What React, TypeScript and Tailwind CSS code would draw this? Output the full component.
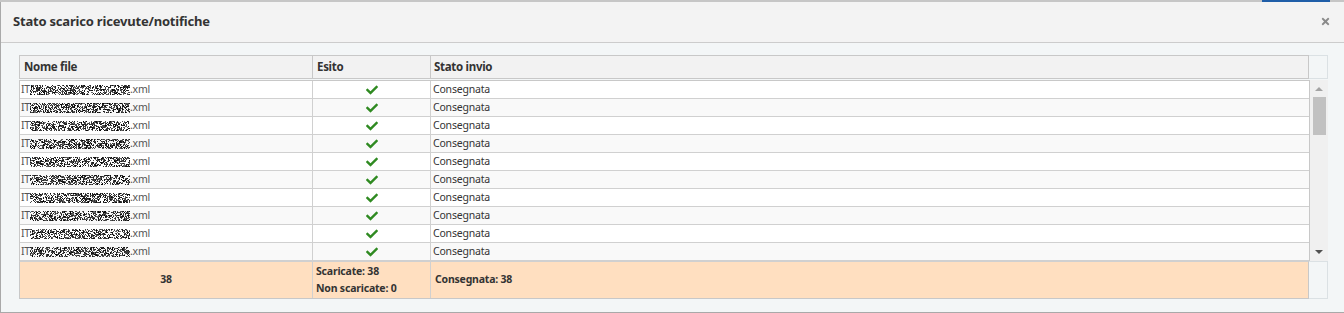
const ROWS = Array.from({ length: 10 }, (_, i) => i)

function rng(seed: number) {
  let s = seed
  return () => {
    s = (s * 1103515245 + 12345) & 0x7fffffff
    return s / 0x7fffffff
  }
}

function Noise({ seed }: { seed: number }) {
  const r = rng(seed)
  const cells: JSX.Element[] = []
  for (let y = 0; y < 10; y++) {
    for (let x = 0; x < 100; x++) {
      const v = r()
      if (v < 0.55) {
        const g = Math.floor(r() * 110)
        cells.push(<rect key={`${x}-${y}`} x={x} y={y} width="1" height="1" fill={`rgb(${g},${g},${g})`} />)
      }
    }
  }
  return (
    <svg width="100" height="10" viewBox="0 0 100 10" shapeRendering="crispEdges" className="inline-block">
      {cells}
    </svg>
  )
}

function Check() {
  return (
    <svg width="12" height="10" viewBox="0 0 512 430" className="text-[#2f8a21]">
      <path
        fill="currentColor"
        d="M173.898 399.404l-166.4-166.4c-9.997-9.997-9.997-26.206 0-36.204l36.203-36.204c9.997-9.998 26.207-9.998 36.204 0L192 272.69 432.095 32.596c9.997-9.997 26.207-9.997 36.204 0l36.203 36.204c9.997 9.997 9.997 26.206 0 36.204l-294.4 294.401c-9.998 9.997-26.207 9.997-36.204-.001z"
      />
    </svg>
  )
}

export default function App() {
  return (
    <div className="w-[1344px] h-[313px] overflow-hidden bg-[#c9c9c9] font-['Noto_Sans',sans-serif] text-[#333]">
      <div className="h-[2px] flex">
        <div className="flex-1 bg-[#c6c6c6]" />
        <div className="w-[68px] bg-[#1f5ea8]" />
        <div className="w-[14px] bg-[#c6c6c6]" />
      </div>
      <div className="h-[311px] border-l border-b border-[#a9a9a9] bg-[#f3f6f7] flex flex-col">
        <div className="h-[41px] shrink-0 bg-[#f3f3f3] border-b border-[#cccccc] flex items-center justify-between pl-[12px] pr-[14px]">
          <span className="text-[13px] font-bold text-[#333] tracking-[-0.2px]">Stato scarico ricevute/notifiche</span>
          <svg width="9" height="11" viewBox="0 0 352 512" className="text-[#8a8a8a] mt-[-2px]">
            <path
              fill="currentColor"
              d="M242.72 256l100.07-100.07c12.28-12.28 12.28-32.19 0-44.480l-22.24-22.24c-12.28-12.28-32.19-12.28-44.48 0L176 189.28 75.93 89.21c-12.28-12.28-32.19-12.28-44.48 0L9.21 111.45c-12.28 12.28-12.28 32.19 0 44.48L109.28 256 9.21 356.07c-12.28 12.28-12.28 32.19 0 44.48l22.24 22.24c12.28 12.28 32.2 12.28 44.48 0L176 322.72l100.07 100.07c12.28 12.28 32.2 12.28 44.48 0l22.24-22.24c12.28-12.28 12.28-32.19 0-44.48L242.72 256z"
            />
          </svg>
        </div>
        <div className="pt-[12px] pl-[18px]">
          <div className="w-[1309px]">
            {/* header */}
            <div className="flex h-[24px]">
              <div className="w-[1290px] flex bg-[#f2f2f2] border border-[#c8c8c8] text-[11.5px] font-bold tracking-[-0.3px]">
                <div className="w-[293px] border-r border-[#c8c8c8] pl-[4px] flex items-center">Nome file</div>
                <div className="w-[118px] border-r border-[#c8c8c8] pl-[4px] flex items-center">Esito</div>
                <div className="flex-1 pl-[3px] flex items-center">Stato invio</div>
              </div>
              <div className="w-[19px] border border-l-0 border-[#dbe1e4]" />
            </div>
            {/* body */}
            <div className="flex mt-px">
              <div className="w-[1291px] border-t border-l border-r border-[#c8c8c8]">
                {ROWS.map((i) => (
                  <div
                    key={i}
                    className={`flex h-[18px] border-b border-[#d0d0d0] text-[10.5px] tracking-[-0.2px] ${i % 2 === 0 ? "bg-white" : "bg-[#f9f9f9]"}`}
                  >
                    <div className="w-[293px] border-r border-[#d0d0d0] pl-[1px] flex items-center text-[#555]">
                      <span>IT</span>
                      <Noise seed={i * 7919 + 17} />
                      <span>.xml</span>
                    </div>
                    <div className="w-[118px] border-r border-[#d0d0d0] flex items-center justify-center">
                      <Check />
                    </div>
                    <div className="flex-1 pl-[2px] flex items-center text-[#333]">Consegnata</div>
                  </div>
                ))}
              </div>
              <div className="w-[18px] bg-[#f0f0f0] flex flex-col items-center">
                <div className="mt-[7px] w-0 h-0 border-l-[4px] border-r-[4px] border-b-[4px] border-l-transparent border-r-transparent border-b-[#a3a3a3]" />
                <div className="mt-[6px] w-[13px] h-[38px] bg-[#c1c1c1]" />
                <div className="flex-1" />
                <div className="mb-[7px] w-0 h-0 border-l-[4px] border-r-[4px] border-t-[4px] border-l-transparent border-r-transparent border-t-[#505050]" />
              </div>
            </div>
            {/* footer */}
            <div className="flex h-[38px]">
              <div className="w-[1290px] flex bg-[#ffdfc0] border border-[#c8c8c8] border-t-[#d0d0d0] text-[10.5px] font-bold tracking-[-0.2px]">
                <div className="w-[293px] border-r border-[#d0d0d0] flex items-center justify-center">38</div>
                <div className="w-[118px] border-r border-[#d0d0d0] pl-[3px] flex flex-col justify-center leading-[17px]">
                  <span>Scaricate: 38</span>
                  <span>Non scaricate: 0</span>
                </div>
                <div className="flex-1 pl-[4px] flex items-center">Consegnata: 38</div>
              </div>
              <div className="w-[19px] border border-l-0 border-[#dbe1e4]" />
            </div>
          </div>
        </div>
      </div>
    </div>
  )
}
